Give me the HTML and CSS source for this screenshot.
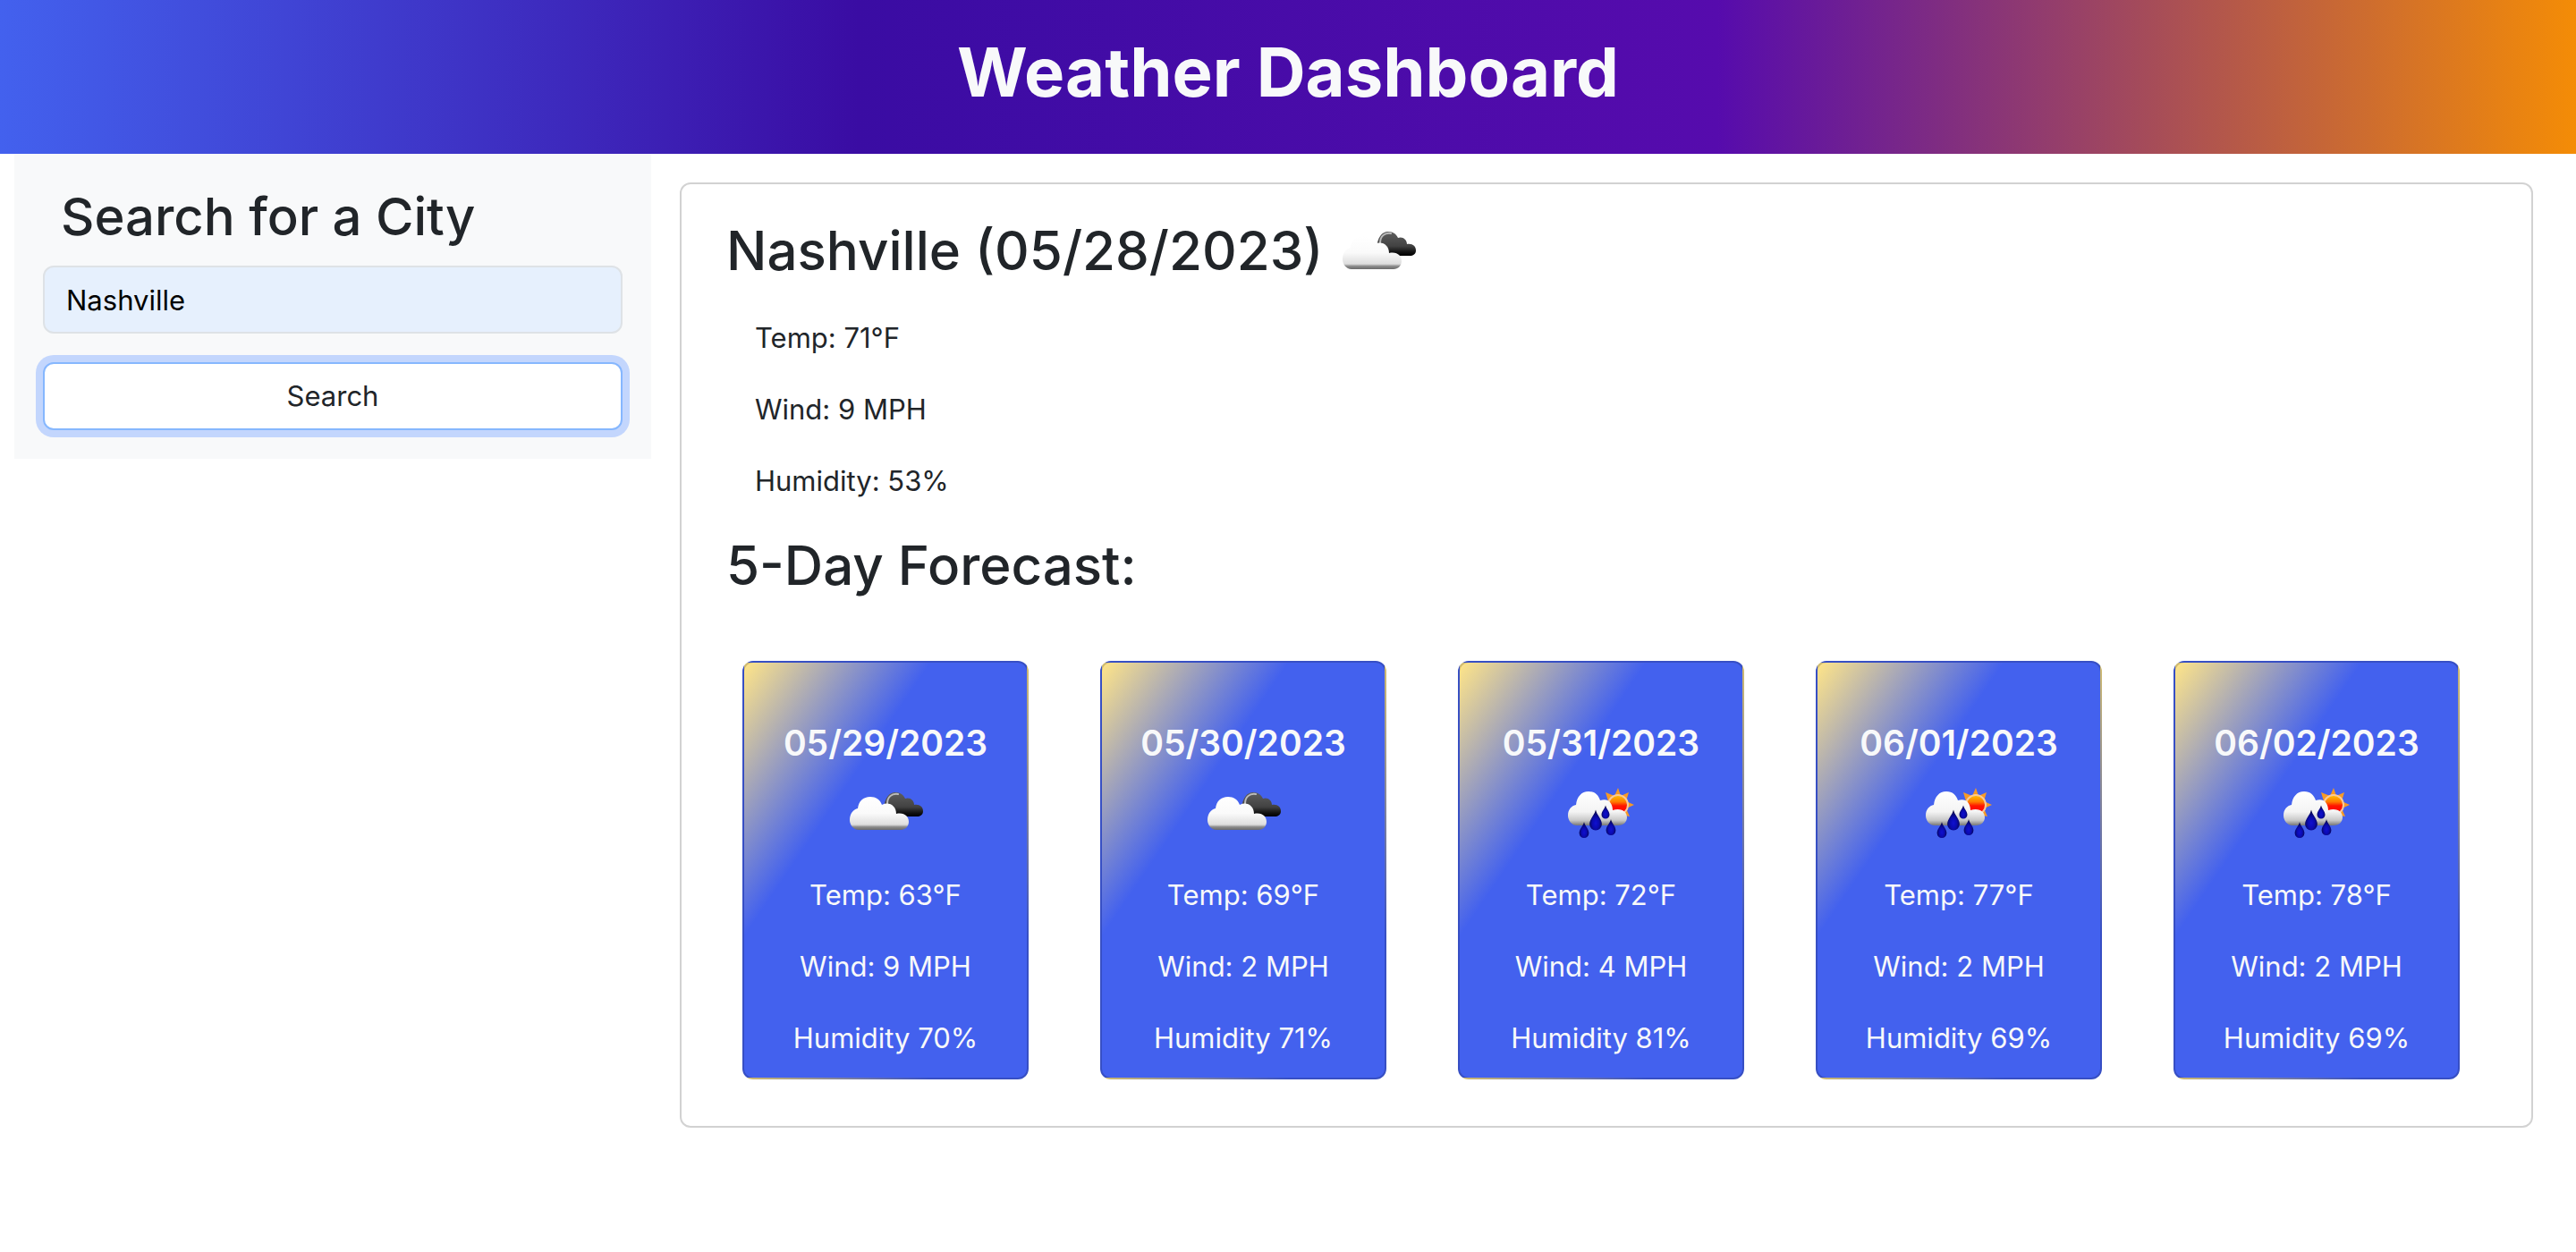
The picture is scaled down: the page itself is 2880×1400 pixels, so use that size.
FILE: index.html
```html
<!DOCTYPE html>
<html lang="en">
<head>
<meta charset="utf-8">
<meta name="viewport" content="width=device-width, initial-scale=1">
<title>Weather Dashboard</title>
<link rel="stylesheet" href="styles.css">
</head>
<body>
<svg class="sprite" aria-hidden="true">
  <defs>
    <linearGradient id="cloud-fill" x1="0" y1="0" x2="0" y2="1">
      <stop offset="0" stop-color="#fff"/>
      <stop offset="0.5" stop-color="#fafafa"/>
      <stop offset="0.84" stop-color="#dedede"/>
      <stop offset="0.91" stop-color="#8c8c8c"/>
      <stop offset="1" stop-color="#6a6a6a"/>
    </linearGradient>
    <linearGradient id="rain-cloud-fill" x1="0" y1="0" x2="0" y2="1">
      <stop offset="0" stop-color="#fff"/>
      <stop offset="0.6" stop-color="#f4f4f4"/>
      <stop offset="0.85" stop-color="#c8c8c8"/>
      <stop offset="1" stop-color="#777"/>
    </linearGradient>
    <linearGradient id="dark-fill" x1="0" y1="0" x2="0" y2="1">
      <stop offset="0" stop-color="#5e5e5e"/>
      <stop offset="0.6" stop-color="#424242"/>
      <stop offset="0.85" stop-color="#111"/>
      <stop offset="1" stop-color="#000"/>
    </linearGradient>
    <linearGradient id="sun-fill" x1="0" y1="0" x2="0" y2="1">
      <stop offset="0" stop-color="#ffc400"/>
      <stop offset="0.35" stop-color="#ff7a00"/>
      <stop offset="0.55" stop-color="#ff1400"/>
      <stop offset="1" stop-color="#ff0000"/>
    </linearGradient>
    <radialGradient id="drop-fill" cx="0.5" cy="0.65" r="0.6">
      <stop offset="0" stop-color="#1010d0"/>
      <stop offset="0.45" stop-color="#0a0ab0"/>
      <stop offset="1" stop-color="#05053c"/>
    </radialGradient>
    <path id="drop" d="M0-10C1-5 6-1 6 4A6 6 0 0 1-6 4C-6-1-1-5 0-10Z"/>
  </defs>
  <symbol id="icon-clouds" viewBox="0 0 100 100">
    <path fill="url(#dark-fill)" d="M48 48C49 35 54 29 61 29C67 29 70 32 72 36C77 34 82 38 82 43C88 42 92 45 92 50C92 54 89 56 85 56H62Z"/>
    <path fill="none" stroke="#bbb" stroke-width="2" stroke-linecap="round" d="M52 42C52 34 57 30 64 31"/>
    <path fill="url(#cloud-fill)" d="M20 71C14 71 10 65 10 60C10 53 14 48 19 47C20 39 25 34 33 34C39 34 44 37 46 43C54 39 62 44 62 53C71 51 76 56 76 62C76 67 72 71 67 71Z"/>
  </symbol>
  <symbol id="icon-rain" viewBox="0 0 100 100">
    <path fill="#f79a26" d="M69 24L72 33L81 29L78 39L87 43L78 47L82 56L72 54L69 62L65 54L56 57L58 47L50 43L58 39L55 29L65 33Z"/>
    <circle cx="69" cy="43" r="11" fill="url(#sun-fill)" stroke="#f9c99a" stroke-width="2"/>
    <path fill="url(#rain-cloud-fill)" d="M23 66C17 66 13 60 13 55C13 48 17 44 22 43C23 34 28 28 36 28C43 28 47 32 49 38C57 35 63 40 63 49C73 46 79 51 79 57C79 62 75 66 69 66Z"/>
    <g fill="url(#drop-fill)">
      <use href="#drop" transform="translate(31 71) scale(.9)"/>
      <use href="#drop" transform="translate(44 60) scale(1.15)"/>
      <use href="#drop" transform="translate(55 51) scale(.75)"/>
      <use href="#drop" transform="translate(61 68) scale(.9)"/>
    </g>
  </symbol>
</svg>

<header class="banner">
  <h1>Weather Dashboard</h1>
</header>

<div class="layout">
  <aside class="search">
    <form>
      <label class="search-title" for="city">Search for a City</label>
      <input class="field" id="city" type="text" value="Nashville">
      <button class="button" type="button">Search</button>
    </form>
  </aside>

  <main class="panel">
    <section class="today">
      <h2>Nashville (05/28/2023) <svg class="icon"><use href="#icon-clouds"/></svg></h2>
      <p>Temp: 71°F</p>
      <p>Wind: 9 MPH</p>
      <p>Humidity: 53%</p>
    </section>
    <h2>5-Day Forecast:</h2>
    <section class="forecast">
      <article class="day">
        <h3>05/29/2023</h3>
        <svg class="icon"><use href="#icon-clouds"/></svg>
        <p>Temp: 63°F</p>
        <p>Wind: 9 MPH</p>
        <p>Humidity 70%</p>
      </article>
      <article class="day">
        <h3>05/30/2023</h3>
        <svg class="icon"><use href="#icon-clouds"/></svg>
        <p>Temp: 69°F</p>
        <p>Wind: 2 MPH</p>
        <p>Humidity 71%</p>
      </article>
      <article class="day">
        <h3>05/31/2023</h3>
        <svg class="icon"><use href="#icon-rain"/></svg>
        <p>Temp: 72°F</p>
        <p>Wind: 4 MPH</p>
        <p>Humidity 81%</p>
      </article>
      <article class="day">
        <h3>06/01/2023</h3>
        <svg class="icon"><use href="#icon-rain"/></svg>
        <p>Temp: 77°F</p>
        <p>Wind: 2 MPH</p>
        <p>Humidity 69%</p>
      </article>
      <article class="day">
        <h3>06/02/2023</h3>
        <svg class="icon"><use href="#icon-rain"/></svg>
        <p>Temp: 78°F</p>
        <p>Wind: 2 MPH</p>
        <p>Humidity 69%</p>
      </article>
    </section>
  </main>
</div>
</body>
</html>
```
FILE: styles.css
```css
* {
  box-sizing: border-box;
}

body {
  margin: 0;
  background: #fff;
  color: #212529;
  font-family: Inter, "Liberation Sans", sans-serif;
  font-size: 31px;
  line-height: 48px;
}

h1, h2, h3, p {
  margin: 0;
}

.sprite {
  position: absolute;
  width: 0;
  height: 0;
}

.banner {
  padding: 32px 32px 44px;
  background: linear-gradient(90deg, #4361ee, #3a0ca3, #560bad, #f48c06);
  color: #f8f9fa;
  text-align: center;
}

h1 {
  font-size: 76px;
  font-weight: 700;
  line-height: 96px;
}

h2, .search-title {
  font-size: 60px;
  font-weight: 500;
  line-height: 77px;
}

.layout {
  display: grid;
  grid-template-columns: 1fr 3fr;
  align-items: start;
  padding: 0 16px;
}

.search {
  padding: 32px;
  background: #f8f9fa;
}

.search-title {
  display: block;
  padding: 0 20px;
  margin-bottom: 16px;
  font-size: 58px;
}

.field, .button {
  display: block;
  width: 100%;
  height: 76px;
  padding: 12px 24px;
  border: 2px solid #dee2e6;
  border-radius: 12px;
  font: inherit;
}

.field {
  margin-bottom: 32px;
  background: #e6f0fd;
  color: #000;
}

.button {
  border-color: #86b7fe;
  background: #fff;
  color: #212529;
  box-shadow: 0 0 0 8px #c3d6fd;
}

.panel {
  margin: 32px 32px 0;
  padding: 24px 80px 52px 50px;
  border: 2px solid rgba(0, 0, 0, 0.175);
  border-radius: 12px;
}

.today {
  margin-bottom: 16px;
}

.today h2 {
  display: flex;
  align-items: center;
  gap: 12px;
  margin-bottom: 8px;
}

.today p {
  padding: 16px 32px;
}

.icon {
  width: 100px;
  height: 100px;
}

.forecast {
  display: grid;
  grid-template-columns: repeat(5, 1fr);
  gap: 80px;
  margin-top: 68px;
  padding-left: 18px;
}

.day {
  display: flex;
  flex-direction: column;
  align-items: center;
  padding: 64px 0 4px;
  border: 2px solid rgba(0, 0, 0, 0.175);
  border-radius: 12px;
  background: linear-gradient(to bottom right, #ffe588, #4361ee 33%);
  color: #f8f9fa;
}

.day h3 {
  font-size: 39px;
  font-weight: 600;
  line-height: 52px;
}

.day .icon {
  margin-bottom: 4px;
}

.day p {
  padding: 16px 0;
}
```
